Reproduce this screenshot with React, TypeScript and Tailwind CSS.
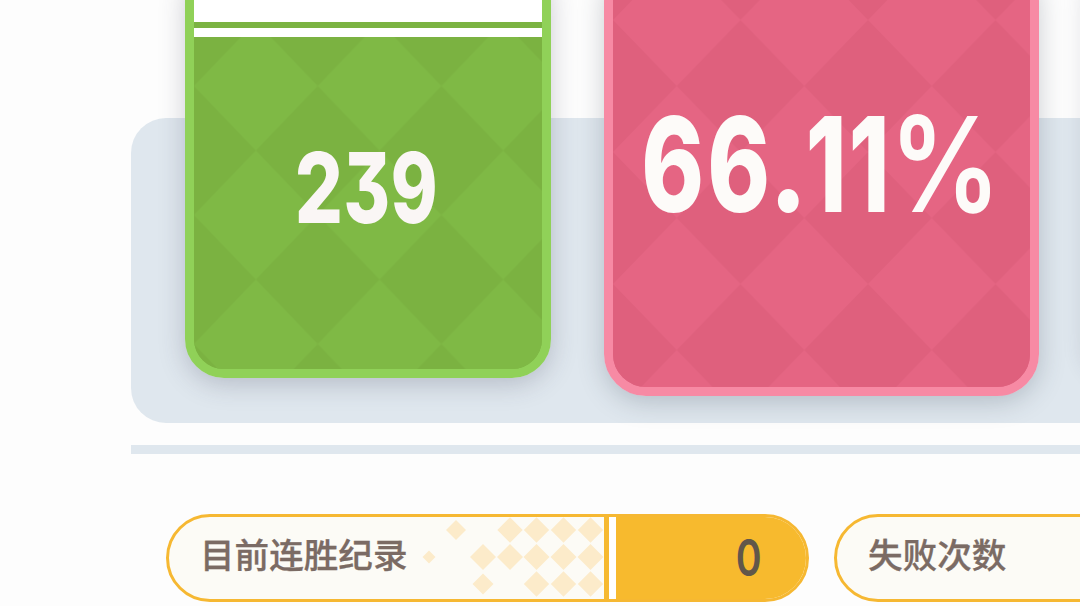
import type { ReactNode } from "react";

type LatticeProps = { id: string; base: string; light: string; w: number; h: number; x: number; y: number };

function Lattice({ id, base, light, w, h, x, y }: LatticeProps) {
  return (
    <svg className="absolute inset-0 h-full w-full" aria-hidden="true">
      <defs>
        <pattern id={id} width={w} height={h} x={x} y={y} patternUnits="userSpaceOnUse">
          <rect width={w} height={h} fill={base} />
          <path d={`M0 ${h / 2}L${w / 2} 0L${w} ${h / 2}L${w / 2} ${h}Z`} fill={light} />
        </pattern>
      </defs>
      <rect width="100%" height="100%" fill={`url(#${id})`} />
    </svg>
  );
}

function Glyph({ box, shape, children }: { box: string; shape: string; children: ReactNode }) {
  return (
    <span className={`flex shrink-0 justify-center ${box}`}>
      <span className={`inline-block ${shape}`}>{children}</span>
    </span>
  );
}

// x, y, half size
const diamonds: [number, number, number][] = [
  [20, 43, 6.5],
  [47, 16, 10],
  [74, 43, 13], [74, 70, 10.5],
  [101, 16, 12.7], [101, 43, 13],
  [127.5, 16, 12.7], [127.5, 43, 13], [127.5, 70, 12.7],
  [154.5, 16, 12.7], [154.5, 43, 13], [154.5, 70, 12.7],
  [181.5, 16, 12.7], [181.5, 43, 13], [181.5, 70, 12.7],
];

function Diamonds() {
  return (
    <svg className="h-full w-[195px] shrink-0" viewBox="0 0 195 82" aria-hidden="true">
      {diamonds.map(([x, y, r]) => (
        <path key={`${x}-${y}`} d={`M${x - r} ${y - 3}l${r} ${-r}l${r} ${r}l${-r} ${r}z`} fill="#fcebca" />
      ))}
    </svg>
  );
}

function Pill({ label, value }: { label: string; value?: string }) {
  return (
    <div className="flex h-[88px] w-[643px] shrink-0 overflow-hidden rounded-full border-[3px] border-[#f6b832] bg-[#fcfbf6]">
      <div className="flex flex-1 items-center justify-between pl-[31px]">
        <span className="whitespace-nowrap pb-[9px] font-['Noto_Sans_CJK_SC',sans-serif] text-[34.6px] leading-none font-medium text-[#7b6b64] [-webkit-text-stroke:0.3px_#7b6b64]">
          {label}
        </span>
        {value && <Diamonds />}
      </div>
      <div className="-mr-[3px] flex w-[205px] shrink-0 border-l-[5px] border-[#f6b930] bg-[#f7ba2e]">
        <div className="w-[7px] bg-white" />
        <div className="flex flex-1 items-center justify-end pr-[47px] pb-[2px]">
          <span className="inline-block origin-right scale-x-[0.77] font-[Inter,sans-serif] text-[51px] leading-none font-semibold text-[#61574a]">
            {value}
          </span>
        </div>
      </div>
    </div>
  );
}

export default function App() {
  return (
    <main className="h-[606px] w-[1080px] overflow-hidden bg-[#fdfdfd]">
      <div className="flex flex-col pt-[118px] pl-[131px]">
        <section className="flex h-[305px] w-[1200px] items-start rounded-[35px] bg-[#dfe7ee] pl-[54px]">
          <article className="-mt-[158px] h-[418px] w-[366px] shrink-0 rounded-[39px] shadow-[0_6px_26px_rgba(60,60,85,0.25)]">
            <div className="relative flex h-full flex-col overflow-hidden rounded-[39px] border-[9px] border-[#90d158] bg-[#7bb342]">
              <Lattice id="green" base="#7bb241" light="#7fb945" w={123.7} h={129} x={0} y={52.5} />
              <div className="relative h-[53px] bg-white" />
              <div className="relative h-[6px] bg-[#7bb342]" />
              <div className="relative h-[9px] bg-white" />
              <div className="relative flex justify-center pt-[101px] pr-[3px] font-[Inter,sans-serif] text-[97px] leading-[100px] font-extrabold text-[#faf6f5] [font-feature-settings:'cv09']">
                <Glyph box="w-[48px]" shape="scale-x-[0.78]">2</Glyph>
                <Glyph box="w-[48px]" shape="scale-x-[0.73]">3</Glyph>
                <Glyph box="w-[48px]" shape="scale-x-[0.73]">9</Glyph>
              </div>
            </div>
          </article>
          <article className="-mt-[158px] ml-[53px] h-[436px] w-[435px] shrink-0 rounded-[42px] shadow-[0_6px_26px_rgba(50,65,80,0.25)]">
            <div className="relative h-full overflow-hidden rounded-[42px] border-[9px] border-[#f78aa4] bg-[#df607e]">
              <Lattice id="pink" base="#df607d" light="#e56583" w={127.5} h={132} x={0} y={-15} />
              <div className="relative flex pt-[127px] pl-[27px] font-[Inter,sans-serif] text-[132px] leading-[136px] font-extrabold text-[#fdfbf9]">
                <Glyph box="w-[66px]" shape="scale-x-[0.72]">6</Glyph>
                <Glyph box="w-[66px]" shape="scale-x-[0.72]">6</Glyph>
                <Glyph box="w-[33px]" shape="scale-x-[0.85]">.</Glyph>
                <Glyph box="w-[43px]" shape="scale-x-[0.7]">1</Glyph>
                <Glyph box="w-[43px]" shape="scale-x-[0.7]">1</Glyph>
                <Glyph box="w-[109px]" shape="scale-x-[0.84] font-semibold">%</Glyph>
              </div>
            </div>
          </article>
          <article className="-mt-[158px] ml-[42px] h-[418px] w-[366px] shrink-0 rounded-[39px] bg-[#90d158] shadow-[0_6px_20px_rgba(60,60,85,0.12)]" />
        </section>
        <div className="mt-[22px] h-[9px] w-[1200px] bg-[#dfe7ee]" />
        <div className="mt-[60px] flex gap-[25px] pl-[35px]">
          <Pill label="目前连胜纪录" value="0" />
          <Pill label="失败次数" />
        </div>
      </div>
    </main>
  );
}
